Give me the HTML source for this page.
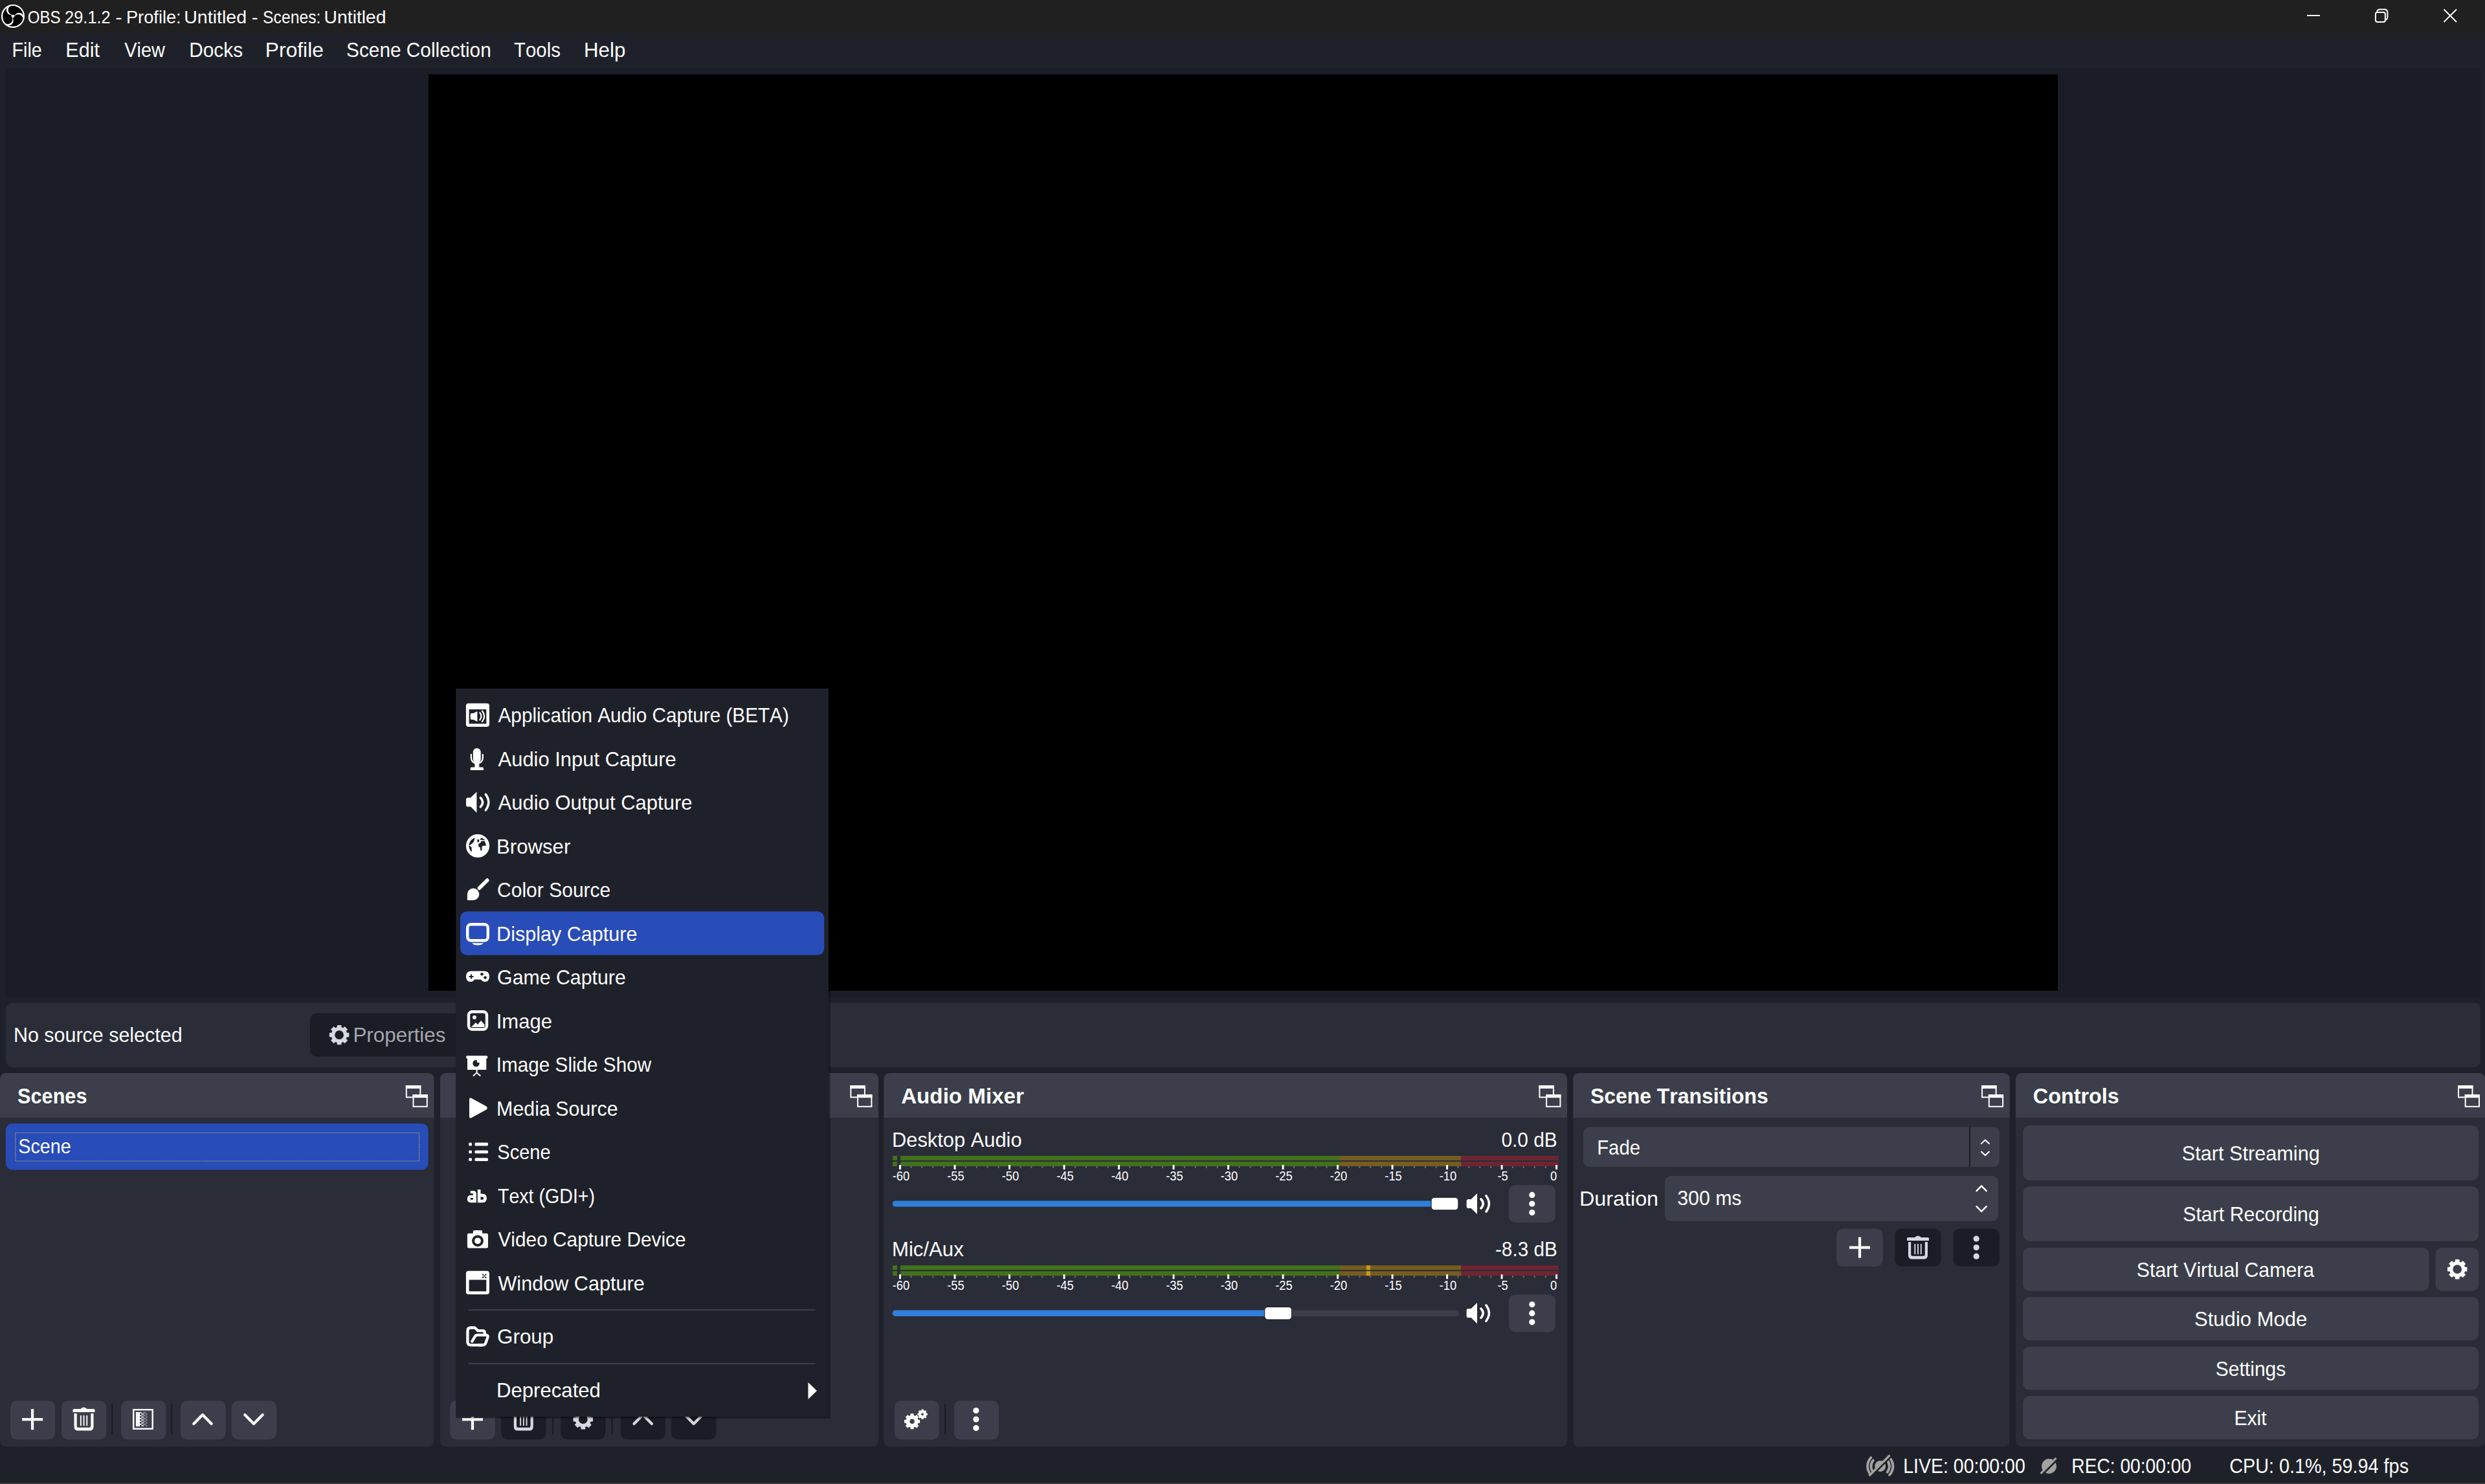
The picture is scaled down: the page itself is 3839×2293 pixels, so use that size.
<!DOCTYPE html>
<html><head><meta charset="utf-8"><title>OBS 29.1.2</title>
<style>html,body{margin:0;padding:0;width:3839px;height:2293px;overflow:hidden;background:#1f212a;}
svg text{font-family:"Liberation Sans", sans-serif;white-space:pre;font-kerning:none;}</style></head>
<body>
<svg width="3839" height="2293" viewBox="0 0 3839 2293" style="position:absolute;left:0;top:0;font-family:&quot;Liberation Sans&quot;, sans-serif;font-kerning:none">
<rect x="0.00" y="0.00" width="3839.00" height="2293.00" rx="0" fill="#1f212a" />
<rect x="0.00" y="0.00" width="3839.00" height="51.00" rx="0" fill="#202020" />
<clipPath id="logoclip"><circle cx="20" cy="25" r="16"/></clipPath>
<circle cx="20" cy="25" r="16.9" fill="#000" stroke="#fff" stroke-width="2.2"/>
<g clip-path="url(#logoclip)"><circle cx="17.40" cy="15.60" r="7.6" fill="#fff"/><circle cx="29.44" cy="27.45" r="7.6" fill="#fff"/><circle cx="13.16" cy="31.95" r="7.6" fill="#fff"/><circle cx="20" cy="25" r="2.6" fill="#fff"/><circle cx="20.00" cy="15.60" r="7.4" fill="#000"/><circle cx="28.14" cy="29.70" r="7.4" fill="#000"/><circle cx="11.86" cy="29.70" r="7.4" fill="#000"/></g>
<text x="42.76" y="36.00" font-size="27.6" fill="#fefefe" textLength="50.74" lengthAdjust="spacingAndGlyphs">OBS</text>
<text x="100.12" y="36.00" font-size="27.6" fill="#fefefe" textLength="70.55" lengthAdjust="spacingAndGlyphs">29.1.2</text>
<text x="178.30" y="36.00" font-size="27.6" fill="#fefefe" textLength="10.50" lengthAdjust="spacingAndGlyphs">-</text>
<text x="194.97" y="36.00" font-size="27.6" fill="#fefefe" textLength="84.72" lengthAdjust="spacingAndGlyphs">Profile:</text>
<text x="284.20" y="36.00" font-size="27.6" fill="#fefefe" textLength="96.84" lengthAdjust="spacingAndGlyphs">Untitled</text>
<text x="388.77" y="36.00" font-size="27.6" fill="#fefefe" textLength="9.96" lengthAdjust="spacingAndGlyphs">-</text>
<text x="406.08" y="36.00" font-size="27.6" fill="#fefefe" textLength="89.28" lengthAdjust="spacingAndGlyphs">Scenes:</text>
<text x="500.62" y="36.00" font-size="27.6" fill="#fefefe" textLength="96.01" lengthAdjust="spacingAndGlyphs">Untitled</text>
<rect x="3564.00" y="23.00" width="20.00" height="2.00" rx="0" fill="#fefefe" />
<path d="M3672,18 Q3673,14.6 3677,14.6 H3683.5 Q3688.4,14.6 3688.4,19.5 V26 Q3688.4,30 3685,31" fill="none" stroke="#fff" stroke-width="2"/>
<rect x="3669.9" y="18.9" width="15" height="15" rx="3" fill="#202020" stroke="#fff" stroke-width="2"/>
<path d="M3775.5,14.5 L3795,34 M3795,14.5 L3775.5,34" stroke="#fff" stroke-width="1.9"/>
<rect x="0.00" y="51.00" width="3839.00" height="54.00" rx="0" fill="#1f212a" />
<text x="18.55" y="88.00" font-size="30.5" fill="#fefefe" textLength="46.23" lengthAdjust="spacingAndGlyphs">File</text>
<text x="101.29" y="88.00" font-size="30.5" fill="#fefefe" textLength="52.63" lengthAdjust="spacingAndGlyphs">Edit</text>
<text x="192.27" y="88.00" font-size="30.5" fill="#fefefe" textLength="62.66" lengthAdjust="spacingAndGlyphs">View</text>
<text x="292.15" y="88.00" font-size="30.5" fill="#fefefe" textLength="82.93" lengthAdjust="spacingAndGlyphs">Docks</text>
<text x="409.89" y="88.00" font-size="30.5" fill="#fefefe" textLength="90.02" lengthAdjust="spacingAndGlyphs">Profile</text>
<text x="535.05" y="88.00" font-size="30.5" fill="#fefefe" textLength="223.69" lengthAdjust="spacingAndGlyphs">Scene Collection</text>
<text x="794.04" y="88.00" font-size="30.5" fill="#fefefe" textLength="71.82" lengthAdjust="spacingAndGlyphs">Tools</text>
<text x="902.04" y="88.00" font-size="30.5" fill="#fefefe" textLength="64.28" lengthAdjust="spacingAndGlyphs">Help</text>
<rect x="9.00" y="105.00" width="3823.00" height="1436.00" rx="0" fill="#1a1c26" />
<rect x="662.00" y="115.00" width="2517.00" height="1416.00" rx="0" fill="#000" />
<rect x="9.00" y="1549.50" width="3823.00" height="99.50" rx="10" fill="#2a2c38" />
<text x="20.90" y="1610.00" font-size="30.5" fill="#fefefe" textLength="260.76" lengthAdjust="spacingAndGlyphs">No source selected</text>
<rect x="479.00" y="1565.40" width="421.00" height="67.00" rx="10" fill="#1a1c26" />
<path d="M521.50,1587.77 L521.46,1584.65 L526.74,1584.65 L526.70,1587.77 L530.27,1589.25 L532.45,1587.02 L536.18,1590.75 L533.95,1592.93 L535.43,1596.50 L538.55,1596.46 L538.55,1601.74 L535.43,1601.70 L533.95,1605.27 L536.18,1607.45 L532.45,1611.18 L530.27,1608.95 L526.70,1610.43 L526.74,1613.55 L521.46,1613.55 L521.50,1610.43 L517.93,1608.95 L515.75,1611.18 L512.02,1607.45 L514.25,1605.27 L512.77,1601.70 L509.65,1601.74 L509.65,1596.46 L512.77,1596.50 L514.25,1592.93 L512.02,1590.75 L515.75,1587.02 L517.93,1589.25 Z M531.75,1599.10 A7.65,7.65 0 1 0 516.45,1599.10 A7.65,7.65 0 1 0 531.75,1599.10 Z" fill="#d6d8e0" fill-rule="evenodd" stroke="#d6d8e0" stroke-width="1.53" stroke-linejoin="round"/>
<text x="545.43" y="1610.00" font-size="30.5" fill="#a6a7ab" textLength="143.01" lengthAdjust="spacingAndGlyphs">Properties</text>
<path d="M0,1727 V1668 Q0,1658 10,1658 H660.4 Q670.4,1658 670.4,1668 V1727 Z" fill="#3c3f4b"/>
<path d="M0,1727 H670.4 V2225.3 Q670.4,2235.3 660.4,2235.3 H10 Q0,2235.3 0,2225.3 Z" fill="#2a2c38"/>
<text x="27.12" y="1704.80" font-size="32.5" font-weight="bold" fill="#fefefe" textLength="107.34" lengthAdjust="spacingAndGlyphs">Scenes</text>
<rect x="626.80" y="1677.00" width="23.50" height="19.40" fill="#3c3f4b"/>
<rect x="627.80" y="1678.00" width="21.50" height="17.40" fill="none" stroke="#fefefe" stroke-width="2"/>
<rect x="626.80" y="1677.00" width="23.50" height="5" fill="#fefefe"/>
<rect x="637.50" y="1691.20" width="23.30" height="19.60" fill="#3c3f4b"/>
<rect x="638.50" y="1692.20" width="21.30" height="17.60" fill="none" stroke="#fefefe" stroke-width="2"/>
<rect x="637.50" y="1691.20" width="23.30" height="5" fill="#fefefe"/>
<rect x="9.00" y="1736.00" width="652.60" height="71.60" rx="10" fill="#284cb8" />
<rect x="23.9" y="1750.5" width="623.6" height="43.5" fill="none" stroke="#c8b46a" stroke-width="1.2" stroke-dasharray="1.2 1.2"/>
<text x="28.30" y="1782.00" font-size="30.5" fill="#fefefe" textLength="81.48" lengthAdjust="spacingAndGlyphs">Scene</text>
<rect x="16.10" y="2164.20" width="69.00" height="60.00" rx="10" fill="#3c3f4b" />
<rect x="34.10" y="2191.10" width="32.00" height="4.2" fill="#fefefe"/>
<rect x="48.00" y="2177.20" width="4.2" height="32.00" fill="#fefefe"/>
<rect x="95.00" y="2164.20" width="69.00" height="60.00" rx="10" fill="#3c3f4b" />
<path d="M112.5,2182.0 V2178.5 Q112.5,2177.0 114.5,2177.0 H124.5 Q126.5,2174.5 129.5,2174.5 Q132.5,2174.5 134.5,2177.0 H144.5 Q146.5,2177.0 146.5,2178.5 V2182.0 Z" fill="#fefefe"/>
<path d="M114.5,2184.0 H118.7 V2203.5 Q118.7,2205.7 120.9,2205.7 H138.1 Q140.3,2205.7 140.3,2203.5 V2184.0 H144.5 V2204.5 Q144.5,2210.5 138.5,2210.5 H120.5 Q114.5,2210.5 114.5,2204.5 Z" fill="#fefefe"/>
<rect x="123.90" y="2187.0" width="1.9" height="16" fill="#fefefe"/>
<rect x="128.60" y="2187.0" width="1.9" height="16" fill="#fefefe"/>
<rect x="133.30" y="2187.0" width="1.9" height="16" fill="#fefefe"/>
<rect x="172.00" y="2169.00" width="2.20" height="47.70" rx="0" fill="#1b1c24" />
<rect x="187.00" y="2164.20" width="69.40" height="60.00" rx="10" fill="#3c3f4b" />
<rect x="206.2" y="2178.2" width="29.5" height="29.5" fill="none" stroke="#fff" stroke-width="2.4"/>
<rect x="209.9" y="2181.9" width="6.4" height="22.2" fill="#fff"/>
<rect x="216.3" y="2181.90" width="2.3" height="2.22" fill="#fff"/>
<rect x="220.8" y="2181.90" width="4.6" height="2.22" fill="#8a8e98"/>
<rect x="216.3" y="2184.12" width="2.3" height="2.22" fill="#1b1c24"/>
<rect x="218.6" y="2184.12" width="2.2" height="2.22" fill="#fff"/>
<rect x="220.8" y="2184.12" width="2.2" height="2.22" fill="#8a8e98"/>
<rect x="223" y="2184.12" width="2.2" height="2.22" fill="#2a2c36"/>
<rect x="225.2" y="2184.12" width="2.4" height="2.22" fill="#8a8e98"/>
<rect x="216.3" y="2186.34" width="2.3" height="2.22" fill="#fff"/>
<rect x="220.8" y="2186.34" width="4.6" height="2.22" fill="#8a8e98"/>
<rect x="216.3" y="2188.56" width="2.3" height="2.22" fill="#1b1c24"/>
<rect x="218.6" y="2188.56" width="2.2" height="2.22" fill="#fff"/>
<rect x="220.8" y="2188.56" width="2.2" height="2.22" fill="#8a8e98"/>
<rect x="223" y="2188.56" width="2.2" height="2.22" fill="#2a2c36"/>
<rect x="225.2" y="2188.56" width="2.4" height="2.22" fill="#8a8e98"/>
<rect x="216.3" y="2190.78" width="2.3" height="2.22" fill="#fff"/>
<rect x="220.8" y="2190.78" width="4.6" height="2.22" fill="#8a8e98"/>
<rect x="216.3" y="2193.00" width="2.3" height="2.22" fill="#1b1c24"/>
<rect x="218.6" y="2193.00" width="2.2" height="2.22" fill="#fff"/>
<rect x="220.8" y="2193.00" width="2.2" height="2.22" fill="#8a8e98"/>
<rect x="223" y="2193.00" width="2.2" height="2.22" fill="#2a2c36"/>
<rect x="225.2" y="2193.00" width="2.4" height="2.22" fill="#8a8e98"/>
<rect x="216.3" y="2195.22" width="2.3" height="2.22" fill="#fff"/>
<rect x="220.8" y="2195.22" width="4.6" height="2.22" fill="#8a8e98"/>
<rect x="216.3" y="2197.44" width="2.3" height="2.22" fill="#1b1c24"/>
<rect x="218.6" y="2197.44" width="2.2" height="2.22" fill="#fff"/>
<rect x="220.8" y="2197.44" width="2.2" height="2.22" fill="#8a8e98"/>
<rect x="223" y="2197.44" width="2.2" height="2.22" fill="#2a2c36"/>
<rect x="225.2" y="2197.44" width="2.4" height="2.22" fill="#8a8e98"/>
<rect x="216.3" y="2199.66" width="2.3" height="2.22" fill="#fff"/>
<rect x="220.8" y="2199.66" width="4.6" height="2.22" fill="#8a8e98"/>
<rect x="216.3" y="2201.88" width="2.3" height="2.22" fill="#1b1c24"/>
<rect x="218.6" y="2201.88" width="2.2" height="2.22" fill="#fff"/>
<rect x="220.8" y="2201.88" width="2.2" height="2.22" fill="#8a8e98"/>
<rect x="223" y="2201.88" width="2.2" height="2.22" fill="#2a2c36"/>
<rect x="225.2" y="2201.88" width="2.4" height="2.22" fill="#8a8e98"/>
<rect x="264.20" y="2169.00" width="2.20" height="47.70" rx="0" fill="#1b1c24" />
<rect x="278.90" y="2164.20" width="69.80" height="60.00" rx="10" fill="#3c3f4b" />
<path d="M299.25,2200.0 L313,2186.0 L326.75,2200.0" fill="none" stroke="#fefefe" stroke-width="4.2" stroke-linecap="round" stroke-linejoin="round"/>
<rect x="357.70" y="2164.20" width="69.60" height="60.00" rx="10" fill="#3c3f4b" />
<path d="M378.25,2186.0 L392,2200.0 L405.75,2186.0" fill="none" stroke="#fefefe" stroke-width="4.2" stroke-linecap="round" stroke-linejoin="round"/>
<path d="M680,1727 V1668 Q680,1658 690,1658 H1347 Q1357,1658 1357,1668 V1727 Z" fill="#3c3f4b"/>
<path d="M680,1727 H1357 V2225.3 Q1357,2235.3 1347,2235.3 H690 Q680,2235.3 680,2225.3 Z" fill="#2a2c38"/>
<text x="706.06" y="1704.80" font-size="32.5" font-weight="bold" fill="#fefefe" textLength="128.25" lengthAdjust="spacingAndGlyphs">Sources</text>
<rect x="1313.40" y="1677.00" width="23.50" height="19.40" fill="#3c3f4b"/>
<rect x="1314.40" y="1678.00" width="21.50" height="17.40" fill="none" stroke="#fefefe" stroke-width="2"/>
<rect x="1313.40" y="1677.00" width="23.50" height="5" fill="#fefefe"/>
<rect x="1324.10" y="1691.20" width="23.30" height="19.60" fill="#3c3f4b"/>
<rect x="1325.10" y="1692.20" width="21.30" height="17.60" fill="none" stroke="#fefefe" stroke-width="2"/>
<rect x="1324.10" y="1691.20" width="23.30" height="5" fill="#fefefe"/>
<rect x="695.20" y="2164.20" width="69.60" height="60.00" rx="10" fill="#3c3f4b" />
<rect x="714.00" y="2191.10" width="32.00" height="4.2" fill="#fefefe"/>
<rect x="727.90" y="2177.20" width="4.2" height="32.00" fill="#fefefe"/>
<rect x="774.20" y="2164.20" width="69.30" height="60.00" rx="10" fill="#1a1c26" />
<path d="M791.8,2182.0 V2178.5 Q791.8,2177.0 793.8,2177.0 H803.8 Q805.8,2174.5 808.8,2174.5 Q811.8,2174.5 813.8,2177.0 H823.8 Q825.8,2177.0 825.8,2178.5 V2182.0 Z" fill="#d6d8e0"/>
<path d="M793.8,2184.0 H798.0 V2203.5 Q798.0,2205.7 800.1999999999999,2205.7 H817.4 Q819.5999999999999,2205.7 819.5999999999999,2203.5 V2184.0 H823.8 V2204.5 Q823.8,2210.5 817.8,2210.5 H799.8 Q793.8,2210.5 793.8,2204.5 Z" fill="#d6d8e0"/>
<rect x="803.20" y="2187.0" width="1.9" height="16" fill="#d6d8e0"/>
<rect x="807.90" y="2187.0" width="1.9" height="16" fill="#d6d8e0"/>
<rect x="812.60" y="2187.0" width="1.9" height="16" fill="#d6d8e0"/>
<rect x="853.00" y="2169.00" width="2.20" height="47.70" rx="0" fill="#1b1c24" />
<rect x="866.20" y="2164.20" width="69.20" height="60.00" rx="10" fill="#1a1c26" />
<path d="M898.20,2181.87 L898.16,2178.75 L903.44,2178.75 L903.40,2181.87 L906.97,2183.35 L909.15,2181.12 L912.88,2184.85 L910.65,2187.03 L912.13,2190.60 L915.25,2190.56 L915.25,2195.84 L912.13,2195.80 L910.65,2199.37 L912.88,2201.55 L909.15,2205.28 L906.97,2203.05 L903.40,2204.53 L903.44,2207.65 L898.16,2207.65 L898.20,2204.53 L894.63,2203.05 L892.45,2205.28 L888.72,2201.55 L890.95,2199.37 L889.47,2195.80 L886.35,2195.84 L886.35,2190.56 L889.47,2190.60 L890.95,2187.03 L888.72,2184.85 L892.45,2181.12 L894.63,2183.35 Z M908.45,2193.20 A7.65,7.65 0 1 0 893.15,2193.20 A7.65,7.65 0 1 0 908.45,2193.20 Z" fill="#d6d8e0" fill-rule="evenodd" stroke="#d6d8e0" stroke-width="1.53" stroke-linejoin="round"/>
<rect x="944.50" y="2169.00" width="2.20" height="47.70" rx="0" fill="#1b1c24" />
<rect x="958.80" y="2164.20" width="68.90" height="60.00" rx="10" fill="#1a1c26" />
<path d="M979.45,2200.0 L993.2,2186.0 L1006.95,2200.0" fill="none" stroke="#d6d8e0" stroke-width="4.2" stroke-linecap="round" stroke-linejoin="round"/>
<rect x="1037.00" y="2164.20" width="69.40" height="60.00" rx="10" fill="#1a1c26" />
<path d="M1057.95,2186.0 L1071.7,2200.0 L1085.45,2186.0" fill="none" stroke="#d6d8e0" stroke-width="4.2" stroke-linecap="round" stroke-linejoin="round"/>
<path d="M1365.5,1727 V1668 Q1365.5,1658 1375.5,1658 H2411 Q2421,1658 2421,1668 V1727 Z" fill="#3c3f4b"/>
<path d="M1365.5,1727 H2421 V2225.3 Q2421,2235.3 2411,2235.3 H1375.5 Q1365.5,2235.3 1365.5,2225.3 Z" fill="#2a2c38"/>
<text x="1392.17" y="1704.80" font-size="32.5" font-weight="bold" fill="#fefefe" textLength="189.83" lengthAdjust="spacingAndGlyphs">Audio Mixer</text>
<rect x="2377.40" y="1677.00" width="23.50" height="19.40" fill="#3c3f4b"/>
<rect x="2378.40" y="1678.00" width="21.50" height="17.40" fill="none" stroke="#fefefe" stroke-width="2"/>
<rect x="2377.40" y="1677.00" width="23.50" height="5" fill="#fefefe"/>
<rect x="2388.10" y="1691.20" width="23.30" height="19.60" fill="#3c3f4b"/>
<rect x="2389.10" y="1692.20" width="21.30" height="17.60" fill="none" stroke="#fefefe" stroke-width="2"/>
<rect x="2388.10" y="1691.20" width="23.30" height="5" fill="#fefefe"/>
<text x="1377.97" y="1772.00" font-size="30.5" fill="#fefefe" textLength="200.63" lengthAdjust="spacingAndGlyphs">Desktop Audio</text>
<text x="2319.43" y="1771.60" font-size="30.5" fill="#fefefe" textLength="86.34" lengthAdjust="spacingAndGlyphs">0.0 dB</text>
<rect x="1378.90" y="1786.00" width="7.10" height="7.00" rx="0" fill="#42711b" />
<rect x="1391.00" y="1786.00" width="679.00" height="7.00" rx="0" fill="#42711b" />
<rect x="2070.00" y="1786.00" width="187.00" height="7.00" rx="0" fill="#745d20" />
<rect x="2257.00" y="1786.00" width="150.80" height="7.00" rx="0" fill="#6e2532" />
<rect x="1378.90" y="1795.00" width="7.10" height="7.00" rx="0" fill="#42711b" />
<rect x="1391.00" y="1795.00" width="679.00" height="7.00" rx="0" fill="#42711b" />
<rect x="2070.00" y="1795.00" width="187.00" height="7.00" rx="0" fill="#745d20" />
<rect x="2257.00" y="1795.00" width="150.80" height="7.00" rx="0" fill="#6e2532" />
<rect x="1389.00" y="1800.00" width="3.00" height="7.00" rx="0" fill="#ffffff" />
<rect x="1406.40" y="1802.00" width="2.00" height="3.00" rx="0" fill="#6b6c72" />
<rect x="1423.30" y="1802.00" width="2.00" height="3.00" rx="0" fill="#6b6c72" />
<rect x="1440.20" y="1802.00" width="2.00" height="3.00" rx="0" fill="#6b6c72" />
<rect x="1457.11" y="1802.00" width="2.00" height="3.00" rx="0" fill="#6b6c72" />
<rect x="1473.51" y="1800.00" width="3.00" height="7.00" rx="0" fill="#ffffff" />
<rect x="1490.91" y="1802.00" width="2.00" height="3.00" rx="0" fill="#6b6c72" />
<rect x="1507.81" y="1802.00" width="2.00" height="3.00" rx="0" fill="#6b6c72" />
<rect x="1524.71" y="1802.00" width="2.00" height="3.00" rx="0" fill="#6b6c72" />
<rect x="1541.62" y="1802.00" width="2.00" height="3.00" rx="0" fill="#6b6c72" />
<rect x="1558.02" y="1800.00" width="3.00" height="7.00" rx="0" fill="#ffffff" />
<rect x="1575.42" y="1802.00" width="2.00" height="3.00" rx="0" fill="#6b6c72" />
<rect x="1592.32" y="1802.00" width="2.00" height="3.00" rx="0" fill="#6b6c72" />
<rect x="1609.22" y="1802.00" width="2.00" height="3.00" rx="0" fill="#6b6c72" />
<rect x="1626.12" y="1802.00" width="2.00" height="3.00" rx="0" fill="#6b6c72" />
<rect x="1642.52" y="1800.00" width="3.00" height="7.00" rx="0" fill="#ffffff" />
<rect x="1659.93" y="1802.00" width="2.00" height="3.00" rx="0" fill="#6b6c72" />
<rect x="1676.83" y="1802.00" width="2.00" height="3.00" rx="0" fill="#6b6c72" />
<rect x="1693.73" y="1802.00" width="2.00" height="3.00" rx="0" fill="#6b6c72" />
<rect x="1710.63" y="1802.00" width="2.00" height="3.00" rx="0" fill="#6b6c72" />
<rect x="1727.03" y="1800.00" width="3.00" height="7.00" rx="0" fill="#ffffff" />
<rect x="1744.43" y="1802.00" width="2.00" height="3.00" rx="0" fill="#6b6c72" />
<rect x="1761.34" y="1802.00" width="2.00" height="3.00" rx="0" fill="#6b6c72" />
<rect x="1778.24" y="1802.00" width="2.00" height="3.00" rx="0" fill="#6b6c72" />
<rect x="1795.14" y="1802.00" width="2.00" height="3.00" rx="0" fill="#6b6c72" />
<rect x="1811.54" y="1800.00" width="3.00" height="7.00" rx="0" fill="#ffffff" />
<rect x="1828.94" y="1802.00" width="2.00" height="3.00" rx="0" fill="#6b6c72" />
<rect x="1845.84" y="1802.00" width="2.00" height="3.00" rx="0" fill="#6b6c72" />
<rect x="1862.75" y="1802.00" width="2.00" height="3.00" rx="0" fill="#6b6c72" />
<rect x="1879.65" y="1802.00" width="2.00" height="3.00" rx="0" fill="#6b6c72" />
<rect x="1896.05" y="1800.00" width="3.00" height="7.00" rx="0" fill="#ffffff" />
<rect x="1913.45" y="1802.00" width="2.00" height="3.00" rx="0" fill="#6b6c72" />
<rect x="1930.35" y="1802.00" width="2.00" height="3.00" rx="0" fill="#6b6c72" />
<rect x="1947.25" y="1802.00" width="2.00" height="3.00" rx="0" fill="#6b6c72" />
<rect x="1964.16" y="1802.00" width="2.00" height="3.00" rx="0" fill="#6b6c72" />
<rect x="1980.56" y="1800.00" width="3.00" height="7.00" rx="0" fill="#ffffff" />
<rect x="1997.96" y="1802.00" width="2.00" height="3.00" rx="0" fill="#6b6c72" />
<rect x="2014.86" y="1802.00" width="2.00" height="3.00" rx="0" fill="#6b6c72" />
<rect x="2031.76" y="1802.00" width="2.00" height="3.00" rx="0" fill="#6b6c72" />
<rect x="2048.66" y="1802.00" width="2.00" height="3.00" rx="0" fill="#6b6c72" />
<rect x="2065.07" y="1800.00" width="3.00" height="7.00" rx="0" fill="#ffffff" />
<rect x="2082.47" y="1802.00" width="2.00" height="3.00" rx="0" fill="#6b6c72" />
<rect x="2099.37" y="1802.00" width="2.00" height="3.00" rx="0" fill="#6b6c72" />
<rect x="2116.27" y="1802.00" width="2.00" height="3.00" rx="0" fill="#6b6c72" />
<rect x="2133.17" y="1802.00" width="2.00" height="3.00" rx="0" fill="#6b6c72" />
<rect x="2149.57" y="1800.00" width="3.00" height="7.00" rx="0" fill="#ffffff" />
<rect x="2166.98" y="1802.00" width="2.00" height="3.00" rx="0" fill="#6b6c72" />
<rect x="2183.88" y="1802.00" width="2.00" height="3.00" rx="0" fill="#6b6c72" />
<rect x="2200.78" y="1802.00" width="2.00" height="3.00" rx="0" fill="#6b6c72" />
<rect x="2217.68" y="1802.00" width="2.00" height="3.00" rx="0" fill="#6b6c72" />
<rect x="2234.08" y="1800.00" width="3.00" height="7.00" rx="0" fill="#ffffff" />
<rect x="2251.48" y="1802.00" width="2.00" height="3.00" rx="0" fill="#6b6c72" />
<rect x="2268.39" y="1802.00" width="2.00" height="3.00" rx="0" fill="#6b6c72" />
<rect x="2285.29" y="1802.00" width="2.00" height="3.00" rx="0" fill="#6b6c72" />
<rect x="2302.19" y="1802.00" width="2.00" height="3.00" rx="0" fill="#6b6c72" />
<rect x="2318.59" y="1800.00" width="3.00" height="7.00" rx="0" fill="#ffffff" />
<rect x="2335.99" y="1802.00" width="2.00" height="3.00" rx="0" fill="#6b6c72" />
<rect x="2352.89" y="1802.00" width="2.00" height="3.00" rx="0" fill="#6b6c72" />
<rect x="2369.80" y="1802.00" width="2.00" height="3.00" rx="0" fill="#6b6c72" />
<rect x="2386.70" y="1802.00" width="2.00" height="3.00" rx="0" fill="#6b6c72" />
<rect x="2403.10" y="1800.00" width="3.00" height="7.00" rx="0" fill="#ffffff" />
<text x="1378.65" y="1823.80" font-size="20" fill="#fefefe" textLength="26.59" lengthAdjust="spacingAndGlyphs">-60</text>
<text x="1463.19" y="1823.80" font-size="20" fill="#fefefe" textLength="26.59" lengthAdjust="spacingAndGlyphs">-55</text>
<text x="1547.67" y="1823.80" font-size="20" fill="#fefefe" textLength="26.59" lengthAdjust="spacingAndGlyphs">-50</text>
<text x="1632.21" y="1823.80" font-size="20" fill="#fefefe" textLength="26.59" lengthAdjust="spacingAndGlyphs">-45</text>
<text x="1716.69" y="1823.80" font-size="20" fill="#fefefe" textLength="26.59" lengthAdjust="spacingAndGlyphs">-40</text>
<text x="1801.22" y="1823.80" font-size="20" fill="#fefefe" textLength="26.59" lengthAdjust="spacingAndGlyphs">-35</text>
<text x="1885.70" y="1823.80" font-size="20" fill="#fefefe" textLength="26.59" lengthAdjust="spacingAndGlyphs">-30</text>
<text x="1970.24" y="1823.80" font-size="20" fill="#fefefe" textLength="26.59" lengthAdjust="spacingAndGlyphs">-25</text>
<text x="2054.72" y="1823.80" font-size="20" fill="#fefefe" textLength="26.59" lengthAdjust="spacingAndGlyphs">-20</text>
<text x="2139.26" y="1823.80" font-size="20" fill="#fefefe" textLength="26.59" lengthAdjust="spacingAndGlyphs">-15</text>
<text x="2223.74" y="1823.80" font-size="20" fill="#fefefe" textLength="26.59" lengthAdjust="spacingAndGlyphs">-10</text>
<text x="2313.39" y="1823.80" font-size="20" fill="#fefefe" textLength="16.36" lengthAdjust="spacingAndGlyphs">-5</text>
<text x="2394.99" y="1823.80" font-size="20" fill="#fefefe" textLength="10.23" lengthAdjust="spacingAndGlyphs">0</text>
<rect x="1378.80" y="1855.40" width="875.20" height="9.20" rx="4.6" fill="#3c3f4b" />
<rect x="1378.80" y="1855.40" width="837.80" height="9.20" rx="4.6" fill="#2f80dc" />
<rect x="2211.10" y="1850.20" width="41.80" height="19.6" rx="5" fill="#fff" stroke="#14161d" stroke-width="1"/>
<g transform="translate(2265.6,1843.9) scale(1.0)"><path d="M7.1,9 L16.4,0 V32.1 L7.1,23 H3.2 Q0,23 0,19.8 V12.2 Q0,9 3.2,9 Z" fill="#fefefe"/><path d="M22.3,8.9 Q28.9,16 22.3,23.1" fill="none" stroke="#fefefe" stroke-width="3.5" stroke-linecap="round"/><path d="M30.3,3.8 Q39.3,16 30.3,28.2" fill="none" stroke="#fefefe" stroke-width="3.5" stroke-linecap="round"/></g>
<rect x="2330.80" y="1831.00" width="72.10" height="58.00" rx="10" fill="#3c3f4b" />
<circle cx="2366.8" cy="1846.40" r="4.6" fill="#fefefe"/>
<circle cx="2366.8" cy="1860.00" r="4.6" fill="#fefefe"/>
<circle cx="2366.8" cy="1873.60" r="4.6" fill="#fefefe"/>
<text x="1377.94" y="1941.20" font-size="30.5" fill="#fefefe" textLength="110.79" lengthAdjust="spacingAndGlyphs">Mic/Aux</text>
<text x="2309.98" y="1940.80" font-size="30.5" fill="#fefefe" textLength="95.79" lengthAdjust="spacingAndGlyphs">-8.3 dB</text>
<rect x="1378.90" y="1955.20" width="7.10" height="7.00" rx="0" fill="#42711b" />
<rect x="1391.00" y="1955.20" width="679.00" height="7.00" rx="0" fill="#42711b" />
<rect x="2070.00" y="1955.20" width="187.00" height="7.00" rx="0" fill="#745d20" />
<rect x="2257.00" y="1955.20" width="150.80" height="7.00" rx="0" fill="#6e2532" />
<rect x="2110.89" y="1955.20" width="6.00" height="7.00" rx="0" fill="#c99a12" />
<rect x="1378.90" y="1964.20" width="7.10" height="7.00" rx="0" fill="#42711b" />
<rect x="1391.00" y="1964.20" width="679.00" height="7.00" rx="0" fill="#42711b" />
<rect x="2070.00" y="1964.20" width="187.00" height="7.00" rx="0" fill="#745d20" />
<rect x="2257.00" y="1964.20" width="150.80" height="7.00" rx="0" fill="#6e2532" />
<rect x="2110.89" y="1964.20" width="6.00" height="7.00" rx="0" fill="#c99a12" />
<rect x="1389.00" y="1969.20" width="3.00" height="7.00" rx="0" fill="#ffffff" />
<rect x="1406.40" y="1971.20" width="2.00" height="3.00" rx="0" fill="#6b6c72" />
<rect x="1423.30" y="1971.20" width="2.00" height="3.00" rx="0" fill="#6b6c72" />
<rect x="1440.20" y="1971.20" width="2.00" height="3.00" rx="0" fill="#6b6c72" />
<rect x="1457.11" y="1971.20" width="2.00" height="3.00" rx="0" fill="#6b6c72" />
<rect x="1473.51" y="1969.20" width="3.00" height="7.00" rx="0" fill="#ffffff" />
<rect x="1490.91" y="1971.20" width="2.00" height="3.00" rx="0" fill="#6b6c72" />
<rect x="1507.81" y="1971.20" width="2.00" height="3.00" rx="0" fill="#6b6c72" />
<rect x="1524.71" y="1971.20" width="2.00" height="3.00" rx="0" fill="#6b6c72" />
<rect x="1541.62" y="1971.20" width="2.00" height="3.00" rx="0" fill="#6b6c72" />
<rect x="1558.02" y="1969.20" width="3.00" height="7.00" rx="0" fill="#ffffff" />
<rect x="1575.42" y="1971.20" width="2.00" height="3.00" rx="0" fill="#6b6c72" />
<rect x="1592.32" y="1971.20" width="2.00" height="3.00" rx="0" fill="#6b6c72" />
<rect x="1609.22" y="1971.20" width="2.00" height="3.00" rx="0" fill="#6b6c72" />
<rect x="1626.12" y="1971.20" width="2.00" height="3.00" rx="0" fill="#6b6c72" />
<rect x="1642.52" y="1969.20" width="3.00" height="7.00" rx="0" fill="#ffffff" />
<rect x="1659.93" y="1971.20" width="2.00" height="3.00" rx="0" fill="#6b6c72" />
<rect x="1676.83" y="1971.20" width="2.00" height="3.00" rx="0" fill="#6b6c72" />
<rect x="1693.73" y="1971.20" width="2.00" height="3.00" rx="0" fill="#6b6c72" />
<rect x="1710.63" y="1971.20" width="2.00" height="3.00" rx="0" fill="#6b6c72" />
<rect x="1727.03" y="1969.20" width="3.00" height="7.00" rx="0" fill="#ffffff" />
<rect x="1744.43" y="1971.20" width="2.00" height="3.00" rx="0" fill="#6b6c72" />
<rect x="1761.34" y="1971.20" width="2.00" height="3.00" rx="0" fill="#6b6c72" />
<rect x="1778.24" y="1971.20" width="2.00" height="3.00" rx="0" fill="#6b6c72" />
<rect x="1795.14" y="1971.20" width="2.00" height="3.00" rx="0" fill="#6b6c72" />
<rect x="1811.54" y="1969.20" width="3.00" height="7.00" rx="0" fill="#ffffff" />
<rect x="1828.94" y="1971.20" width="2.00" height="3.00" rx="0" fill="#6b6c72" />
<rect x="1845.84" y="1971.20" width="2.00" height="3.00" rx="0" fill="#6b6c72" />
<rect x="1862.75" y="1971.20" width="2.00" height="3.00" rx="0" fill="#6b6c72" />
<rect x="1879.65" y="1971.20" width="2.00" height="3.00" rx="0" fill="#6b6c72" />
<rect x="1896.05" y="1969.20" width="3.00" height="7.00" rx="0" fill="#ffffff" />
<rect x="1913.45" y="1971.20" width="2.00" height="3.00" rx="0" fill="#6b6c72" />
<rect x="1930.35" y="1971.20" width="2.00" height="3.00" rx="0" fill="#6b6c72" />
<rect x="1947.25" y="1971.20" width="2.00" height="3.00" rx="0" fill="#6b6c72" />
<rect x="1964.16" y="1971.20" width="2.00" height="3.00" rx="0" fill="#6b6c72" />
<rect x="1980.56" y="1969.20" width="3.00" height="7.00" rx="0" fill="#ffffff" />
<rect x="1997.96" y="1971.20" width="2.00" height="3.00" rx="0" fill="#6b6c72" />
<rect x="2014.86" y="1971.20" width="2.00" height="3.00" rx="0" fill="#6b6c72" />
<rect x="2031.76" y="1971.20" width="2.00" height="3.00" rx="0" fill="#6b6c72" />
<rect x="2048.66" y="1971.20" width="2.00" height="3.00" rx="0" fill="#6b6c72" />
<rect x="2065.07" y="1969.20" width="3.00" height="7.00" rx="0" fill="#ffffff" />
<rect x="2082.47" y="1971.20" width="2.00" height="3.00" rx="0" fill="#6b6c72" />
<rect x="2099.37" y="1971.20" width="2.00" height="3.00" rx="0" fill="#6b6c72" />
<rect x="2116.27" y="1971.20" width="2.00" height="3.00" rx="0" fill="#6b6c72" />
<rect x="2133.17" y="1971.20" width="2.00" height="3.00" rx="0" fill="#6b6c72" />
<rect x="2149.57" y="1969.20" width="3.00" height="7.00" rx="0" fill="#ffffff" />
<rect x="2166.98" y="1971.20" width="2.00" height="3.00" rx="0" fill="#6b6c72" />
<rect x="2183.88" y="1971.20" width="2.00" height="3.00" rx="0" fill="#6b6c72" />
<rect x="2200.78" y="1971.20" width="2.00" height="3.00" rx="0" fill="#6b6c72" />
<rect x="2217.68" y="1971.20" width="2.00" height="3.00" rx="0" fill="#6b6c72" />
<rect x="2234.08" y="1969.20" width="3.00" height="7.00" rx="0" fill="#ffffff" />
<rect x="2251.48" y="1971.20" width="2.00" height="3.00" rx="0" fill="#6b6c72" />
<rect x="2268.39" y="1971.20" width="2.00" height="3.00" rx="0" fill="#6b6c72" />
<rect x="2285.29" y="1971.20" width="2.00" height="3.00" rx="0" fill="#6b6c72" />
<rect x="2302.19" y="1971.20" width="2.00" height="3.00" rx="0" fill="#6b6c72" />
<rect x="2318.59" y="1969.20" width="3.00" height="7.00" rx="0" fill="#ffffff" />
<rect x="2335.99" y="1971.20" width="2.00" height="3.00" rx="0" fill="#6b6c72" />
<rect x="2352.89" y="1971.20" width="2.00" height="3.00" rx="0" fill="#6b6c72" />
<rect x="2369.80" y="1971.20" width="2.00" height="3.00" rx="0" fill="#6b6c72" />
<rect x="2386.70" y="1971.20" width="2.00" height="3.00" rx="0" fill="#6b6c72" />
<rect x="2403.10" y="1969.20" width="3.00" height="7.00" rx="0" fill="#ffffff" />
<text x="1378.65" y="1993.00" font-size="20" fill="#fefefe" textLength="26.59" lengthAdjust="spacingAndGlyphs">-60</text>
<text x="1463.19" y="1993.00" font-size="20" fill="#fefefe" textLength="26.59" lengthAdjust="spacingAndGlyphs">-55</text>
<text x="1547.67" y="1993.00" font-size="20" fill="#fefefe" textLength="26.59" lengthAdjust="spacingAndGlyphs">-50</text>
<text x="1632.21" y="1993.00" font-size="20" fill="#fefefe" textLength="26.59" lengthAdjust="spacingAndGlyphs">-45</text>
<text x="1716.69" y="1993.00" font-size="20" fill="#fefefe" textLength="26.59" lengthAdjust="spacingAndGlyphs">-40</text>
<text x="1801.22" y="1993.00" font-size="20" fill="#fefefe" textLength="26.59" lengthAdjust="spacingAndGlyphs">-35</text>
<text x="1885.70" y="1993.00" font-size="20" fill="#fefefe" textLength="26.59" lengthAdjust="spacingAndGlyphs">-30</text>
<text x="1970.24" y="1993.00" font-size="20" fill="#fefefe" textLength="26.59" lengthAdjust="spacingAndGlyphs">-25</text>
<text x="2054.72" y="1993.00" font-size="20" fill="#fefefe" textLength="26.59" lengthAdjust="spacingAndGlyphs">-20</text>
<text x="2139.26" y="1993.00" font-size="20" fill="#fefefe" textLength="26.59" lengthAdjust="spacingAndGlyphs">-15</text>
<text x="2223.74" y="1993.00" font-size="20" fill="#fefefe" textLength="26.59" lengthAdjust="spacingAndGlyphs">-10</text>
<text x="2313.39" y="1993.00" font-size="20" fill="#fefefe" textLength="16.36" lengthAdjust="spacingAndGlyphs">-5</text>
<text x="2394.99" y="1993.00" font-size="20" fill="#fefefe" textLength="10.23" lengthAdjust="spacingAndGlyphs">0</text>
<rect x="1378.80" y="2024.60" width="875.20" height="9.20" rx="4.6" fill="#3c3f4b" />
<rect x="1378.80" y="2024.60" width="580.40" height="9.20" rx="4.6" fill="#2f80dc" />
<rect x="1953.70" y="2019.40" width="41.80" height="19.6" rx="5" fill="#fff" stroke="#14161d" stroke-width="1"/>
<g transform="translate(2265.6,2013.1000000000001) scale(1.0)"><path d="M7.1,9 L16.4,0 V32.1 L7.1,23 H3.2 Q0,23 0,19.8 V12.2 Q0,9 3.2,9 Z" fill="#fefefe"/><path d="M22.3,8.9 Q28.9,16 22.3,23.1" fill="none" stroke="#fefefe" stroke-width="3.5" stroke-linecap="round"/><path d="M30.3,3.8 Q39.3,16 30.3,28.2" fill="none" stroke="#fefefe" stroke-width="3.5" stroke-linecap="round"/></g>
<rect x="2330.80" y="2000.20" width="72.10" height="58.00" rx="10" fill="#3c3f4b" />
<circle cx="2366.8" cy="2015.60" r="4.6" fill="#fefefe"/>
<circle cx="2366.8" cy="2029.20" r="4.6" fill="#fefefe"/>
<circle cx="2366.8" cy="2042.80" r="4.6" fill="#fefefe"/>
<rect x="1381.90" y="2164.20" width="68.90" height="60.00" rx="10" fill="#3c3f4b" />
<path d="M1407.22,2187.29 L1407.20,2184.86 L1411.00,2184.86 L1410.98,2187.29 L1414.14,2188.60 L1415.84,2186.86 L1418.54,2189.56 L1416.80,2191.26 L1418.11,2194.42 L1420.54,2194.40 L1420.54,2198.20 L1418.11,2198.18 L1416.80,2201.34 L1418.54,2203.04 L1415.84,2205.74 L1414.14,2204.00 L1410.98,2205.31 L1411.00,2207.74 L1407.20,2207.74 L1407.22,2205.31 L1404.06,2204.00 L1402.36,2205.74 L1399.66,2203.04 L1401.40,2201.34 L1400.09,2198.18 L1397.66,2198.20 L1397.66,2194.40 L1400.09,2194.42 L1401.40,2191.26 L1399.66,2189.56 L1402.36,2186.86 L1404.06,2188.60 Z M1413.40,2196.30 A4.3,4.3 0 1 0 1404.80,2196.30 A4.3,4.3 0 1 0 1413.40,2196.30 Z" fill="#fff" fill-rule="evenodd" stroke="#fff" stroke-width="1.2" stroke-linejoin="round"/>
<path d="M1423.89,2179.42 L1423.89,2177.90 L1426.31,2177.90 L1426.31,2179.42 L1428.33,2180.26 L1429.40,2179.18 L1431.12,2180.90 L1430.04,2181.97 L1430.88,2183.99 L1432.40,2183.99 L1432.40,2186.41 L1430.88,2186.41 L1430.04,2188.43 L1431.12,2189.50 L1429.40,2191.22 L1428.33,2190.14 L1426.31,2190.98 L1426.31,2192.50 L1423.89,2192.50 L1423.89,2190.98 L1421.87,2190.14 L1420.80,2191.22 L1419.08,2189.50 L1420.16,2188.43 L1419.32,2186.41 L1417.80,2186.41 L1417.80,2183.99 L1419.32,2183.99 L1420.16,2181.97 L1419.08,2180.90 L1420.80,2179.18 L1421.87,2180.26 Z M1427.40,2185.20 A2.3,2.3 0 1 0 1422.80,2185.20 A2.3,2.3 0 1 0 1427.40,2185.20 Z" fill="#fff" fill-rule="evenodd" stroke="#fff" stroke-width="0.8" stroke-linejoin="round"/>
<rect x="1459.00" y="2169.00" width="2.20" height="47.70" rx="0" fill="#1b1c24" />
<rect x="1473.80" y="2164.20" width="69.30" height="60.00" rx="10" fill="#3c3f4b" />
<circle cx="1507.9" cy="2179.50" r="4.6" fill="#fefefe"/>
<circle cx="1507.9" cy="2193.00" r="4.6" fill="#fefefe"/>
<circle cx="1507.9" cy="2206.50" r="4.6" fill="#fefefe"/>
<path d="M2430.3,1727 V1668 Q2430.3,1658 2440.3,1658 H3094.7 Q3104.7,1658 3104.7,1668 V1727 Z" fill="#3c3f4b"/>
<path d="M2430.3,1727 H3104.7 V2225.3 Q3104.7,2235.3 3094.7,2235.3 H2440.3 Q2430.3,2235.3 2430.3,2225.3 Z" fill="#2a2c38"/>
<text x="2456.98" y="1704.80" font-size="32.5" font-weight="bold" fill="#fefefe" textLength="274.83" lengthAdjust="spacingAndGlyphs">Scene Transitions</text>
<rect x="3061.10" y="1677.00" width="23.50" height="19.40" fill="#3c3f4b"/>
<rect x="3062.10" y="1678.00" width="21.50" height="17.40" fill="none" stroke="#fefefe" stroke-width="2"/>
<rect x="3061.10" y="1677.00" width="23.50" height="5" fill="#fefefe"/>
<rect x="3071.80" y="1691.20" width="23.30" height="19.60" fill="#3c3f4b"/>
<rect x="3072.80" y="1692.20" width="21.30" height="17.60" fill="none" stroke="#fefefe" stroke-width="2"/>
<rect x="3071.80" y="1691.20" width="23.30" height="5" fill="#fefefe"/>
<rect x="2446.00" y="1741.40" width="643.00" height="61.60" rx="9" fill="#3c3f4b" />
<rect x="3042.00" y="1741.40" width="2.00" height="61.60" rx="0" fill="#1b1c24" />
<path d="M3060.9,1767.1 L3066.9,1761.5 L3072.9,1767.1" fill="none" stroke="#fefefe" stroke-width="2.1" stroke-linecap="round" stroke-linejoin="round"/>
<path d="M3060.9,1779.6000000000001 L3066.9,1785.2 L3072.9,1779.6000000000001" fill="none" stroke="#fefefe" stroke-width="2.1" stroke-linecap="round" stroke-linejoin="round"/>
<text x="2467.19" y="1784.00" font-size="30.5" fill="#fefefe" textLength="66.91" lengthAdjust="spacingAndGlyphs">Fade</text>
<text x="2439.95" y="1863.30" font-size="30.5" fill="#fefefe" textLength="122.15" lengthAdjust="spacingAndGlyphs">Duration</text>
<rect x="2571.90" y="1817.00" width="514.90" height="69.80" rx="9" fill="#3c3f4b" />
<text x="2591.25" y="1861.80" font-size="30.5" fill="#fefefe" textLength="99.25" lengthAdjust="spacingAndGlyphs">300 ms</text>
<path d="M3053.5,1840.2 L3061.1,1832.3999999999999 L3068.7,1840.2" fill="none" stroke="#fefefe" stroke-width="2.5" stroke-linecap="round" stroke-linejoin="round"/>
<path d="M3053.5,1864.1 L3061.1,1871.9 L3068.7,1864.1" fill="none" stroke="#fefefe" stroke-width="2.5" stroke-linecap="round" stroke-linejoin="round"/>
<rect x="2837.10" y="1898.50" width="71.70" height="58.20" rx="10" fill="#3c3f4b" />
<rect x="2857.00" y="1925.50" width="32.00" height="4.2" fill="#fefefe"/>
<rect x="2870.90" y="1911.60" width="4.2" height="32.00" fill="#fefefe"/>
<rect x="2927.30" y="1898.50" width="71.40" height="58.20" rx="10" fill="#1a1c26" />
<path d="M2946,1917.0 V1913.5 Q2946,1912.0 2948,1912.0 H2958 Q2960,1909.5 2963,1909.5 Q2966,1909.5 2968,1912.0 H2978 Q2980,1912.0 2980,1913.5 V1917.0 Z" fill="#d6d8e0"/>
<path d="M2948,1919.0 H2952.2 V1938.5 Q2952.2,1940.7 2954.4,1940.7 H2971.6 Q2973.8,1940.7 2973.8,1938.5 V1919.0 H2978 V1939.5 Q2978,1945.5 2972,1945.5 H2954 Q2948,1945.5 2948,1939.5 Z" fill="#d6d8e0"/>
<rect x="2957.40" y="1922.0" width="1.9" height="16" fill="#d6d8e0"/>
<rect x="2962.10" y="1922.0" width="1.9" height="16" fill="#d6d8e0"/>
<rect x="2966.80" y="1922.0" width="1.9" height="16" fill="#d6d8e0"/>
<rect x="3017.50" y="1898.50" width="71.40" height="58.20" rx="10" fill="#1a1c26" />
<circle cx="3053.2" cy="1914.00" r="4.6" fill="#d6d8e0"/>
<circle cx="3053.2" cy="1927.60" r="4.6" fill="#d6d8e0"/>
<circle cx="3053.2" cy="1941.20" r="4.6" fill="#d6d8e0"/>
<path d="M3114,1727 V1668 Q3114,1658 3124,1658 H3829 Q3839,1658 3839,1668 V1727 Z" fill="#3c3f4b"/>
<path d="M3114,1727 H3839 V2225.3 Q3839,2235.3 3829,2235.3 H3124 Q3114,2235.3 3114,2225.3 Z" fill="#2a2c38"/>
<text x="3140.87" y="1704.80" font-size="32.5" font-weight="bold" fill="#fefefe" textLength="132.95" lengthAdjust="spacingAndGlyphs">Controls</text>
<rect x="3797.00" y="1677.00" width="23.50" height="19.40" fill="#3c3f4b"/>
<rect x="3798.00" y="1678.00" width="21.50" height="17.40" fill="none" stroke="#fefefe" stroke-width="2"/>
<rect x="3797.00" y="1677.00" width="23.50" height="5" fill="#fefefe"/>
<rect x="3807.70" y="1691.20" width="23.30" height="19.60" fill="#3c3f4b"/>
<rect x="3808.70" y="1692.20" width="21.30" height="17.60" fill="none" stroke="#fefefe" stroke-width="2"/>
<rect x="3807.70" y="1691.20" width="23.30" height="5" fill="#fefefe"/>
<rect x="3125.30" y="1739.00" width="703.90" height="84.80" rx="10" fill="#3c3f4b" />
<text x="3370.71" y="1793.00" font-size="30.5" fill="#fefefe" textLength="213.07" lengthAdjust="spacingAndGlyphs">Start Streaming</text>
<rect x="3125.30" y="1833.30" width="703.90" height="84.70" rx="10" fill="#3c3f4b" />
<text x="3372.22" y="1886.80" font-size="30.5" fill="#fefefe" textLength="210.63" lengthAdjust="spacingAndGlyphs">Start Recording</text>
<rect x="3125.30" y="1927.90" width="627.50" height="66.90" rx="10" fill="#3c3f4b" />
<text x="3300.82" y="1972.50" font-size="30.5" fill="#fefefe" textLength="274.38" lengthAdjust="spacingAndGlyphs">Start Virtual Camera</text>
<rect x="3125.30" y="2004.00" width="703.90" height="66.90" rx="10" fill="#3c3f4b" />
<text x="3389.99" y="2048.60" font-size="30.5" fill="#fefefe" textLength="174.39" lengthAdjust="spacingAndGlyphs">Studio Mode</text>
<rect x="3125.30" y="2080.70" width="703.90" height="66.90" rx="10" fill="#3c3f4b" />
<text x="3422.73" y="2125.90" font-size="30.5" fill="#fefefe" textLength="108.65" lengthAdjust="spacingAndGlyphs">Settings</text>
<rect x="3125.30" y="2157.10" width="703.90" height="66.90" rx="10" fill="#3c3f4b" />
<text x="3451.42" y="2202.00" font-size="30.5" fill="#fefefe" textLength="50.30" lengthAdjust="spacingAndGlyphs">Exit</text>
<rect x="3762.60" y="1927.90" width="66.60" height="66.90" rx="10" fill="#3c3f4b" />
<path d="M3793.60,1949.87 L3793.56,1946.75 L3798.84,1946.75 L3798.80,1949.87 L3802.37,1951.35 L3804.55,1949.12 L3808.28,1952.85 L3806.05,1955.03 L3807.53,1958.60 L3810.65,1958.56 L3810.65,1963.84 L3807.53,1963.80 L3806.05,1967.37 L3808.28,1969.55 L3804.55,1973.28 L3802.37,1971.05 L3798.80,1972.53 L3798.84,1975.65 L3793.56,1975.65 L3793.60,1972.53 L3790.03,1971.05 L3787.85,1973.28 L3784.12,1969.55 L3786.35,1967.37 L3784.87,1963.80 L3781.75,1963.84 L3781.75,1958.56 L3784.87,1958.60 L3786.35,1955.03 L3784.12,1952.85 L3787.85,1949.12 L3790.03,1951.35 Z M3803.85,1961.20 A7.65,7.65 0 1 0 3788.55,1961.20 A7.65,7.65 0 1 0 3803.85,1961.20 Z" fill="#fff" fill-rule="evenodd" stroke="#fff" stroke-width="1.53" stroke-linejoin="round"/>
<rect x="0.00" y="2235.30" width="3839.00" height="57.70" rx="0" fill="#1f212a" />
<rect x="0.00" y="2291.00" width="3839.00" height="2.00" rx="0" fill="#3a3a3a" />
<text x="2940.26" y="2275.70" font-size="30.5" fill="#fefefe" textLength="188.55" lengthAdjust="spacingAndGlyphs">LIVE: 00:00:00</text>
<text x="3200.29" y="2275.50" font-size="30.5" fill="#fefefe" textLength="184.81" lengthAdjust="spacingAndGlyphs">REC: 00:00:00</text>
<text x="3444.14" y="2275.50" font-size="30.5" fill="#fefefe" textLength="276.90" lengthAdjust="spacingAndGlyphs">CPU: 0.1%, 59.94 fps</text>
<circle cx="3165.5" cy="2265.5" r="11.4" fill="#a3a29e"/>
<path d="M3154.5,2279 L3178.5,2255" stroke="#1f212a" stroke-width="3"/>
<path d="M3152.5,2276.8 L3176.5,2252.8" stroke="#a3a29e" stroke-width="3.2"/>
<path d="M2890.37,2278.97 A19.6,19.6 0 0 1 2890.37,2252.23 M2919.03,2252.23 A19.6,19.6 0 0 1 2919.03,2278.97 M2893.82,2274.73 A14.2,14.2 0 0 1 2893.82,2256.47 M2915.58,2256.47 A14.2,14.2 0 0 1 2915.58,2274.73" fill="none" stroke="#a3a29e" stroke-width="3.9" stroke-linecap="round"/>
<circle cx="2904.7" cy="2265.6" r="8.5" fill="#a3a29e"/>
<path d="M2889.5,2282 L2921.5,2250" stroke="#1f212a" stroke-width="3.2"/>
<path d="M2887.6,2280.4 L2919.5,2248.5" stroke="#a3a29e" stroke-width="3.4"/>
<rect x="705.2" y="1065" width="578.3" height="1127.5" rx="1.5" fill="#000" opacity="0.12"/>
<rect x="704.2" y="1064" width="577.8" height="1127" fill="#000" opacity="0.3"/>
<rect x="704.20" y="1064.00" width="575.80" height="1125.00" rx="0" fill="#1f212a" />
<rect x="711.00" y="1408.20" width="562.20" height="67.60" rx="10" fill="#284cb8" />
<text x="769.54" y="1116.00" font-size="30.5" fill="#fefefe" textLength="449.30" lengthAdjust="spacingAndGlyphs">Application Audio Capture (BETA)</text>
<text x="769.54" y="1183.50" font-size="30.5" fill="#fefefe" textLength="275.24" lengthAdjust="spacingAndGlyphs">Audio Input Capture</text>
<text x="769.54" y="1251.00" font-size="30.5" fill="#fefefe" textLength="300.04" lengthAdjust="spacingAndGlyphs">Audio Output Capture</text>
<text x="767.04" y="1318.50" font-size="30.5" fill="#fefefe" textLength="114.27" lengthAdjust="spacingAndGlyphs">Browser</text>
<text x="768.07" y="1386.00" font-size="30.5" fill="#fefefe" textLength="175.26" lengthAdjust="spacingAndGlyphs">Color Source</text>
<text x="767.09" y="1453.50" font-size="30.5" fill="#fefefe" textLength="217.36" lengthAdjust="spacingAndGlyphs">Display Capture</text>
<text x="768.08" y="1521.00" font-size="30.5" fill="#fefefe" textLength="198.67" lengthAdjust="spacingAndGlyphs">Game Capture</text>
<text x="766.73" y="1588.50" font-size="30.5" fill="#fefefe" textLength="86.45" lengthAdjust="spacingAndGlyphs">Image</text>
<text x="766.86" y="1656.00" font-size="30.5" fill="#fefefe" textLength="239.27" lengthAdjust="spacingAndGlyphs">Image Slide Show</text>
<text x="767.11" y="1723.50" font-size="30.5" fill="#fefefe" textLength="187.44" lengthAdjust="spacingAndGlyphs">Media Source</text>
<text x="768.28" y="1791.00" font-size="30.5" fill="#fefefe" textLength="82.31" lengthAdjust="spacingAndGlyphs">Scene</text>
<text x="768.96" y="1858.50" font-size="30.5" fill="#fefefe" textLength="150.12" lengthAdjust="spacingAndGlyphs">Text (GDI+)</text>
<text x="769.47" y="1926.00" font-size="30.5" fill="#fefefe" textLength="290.16" lengthAdjust="spacingAndGlyphs">Video Capture Device</text>
<text x="769.47" y="1993.50" font-size="30.5" fill="#fefefe" textLength="226.29" lengthAdjust="spacingAndGlyphs">Window Capture</text>
<text x="768.02" y="2076.00" font-size="30.5" fill="#fefefe" textLength="87.30" lengthAdjust="spacingAndGlyphs">Group</text>
<text x="767.05" y="2159.00" font-size="30.5" fill="#fefefe" textLength="160.86" lengthAdjust="spacingAndGlyphs">Deprecated</text>
<rect x="724.00" y="2023.00" width="535.70" height="2.00" rx="0" fill="#3c3f4b" />
<rect x="724.00" y="2106.00" width="535.70" height="2.00" rx="0" fill="#3c3f4b" />
<path d="M1248.5,2136 L1262,2149 L1248.5,2162 Z" fill="#fff"/>
<rect x="719.9" y="1086.7" width="36.1" height="36.3" rx="4" fill="#fff"/>
<rect x="724.6" y="1096.1" width="26.7" height="22.2" fill="#1f212a"/>
<path d="M731.4,1102 L737.4,1099 V1115 L731.4,1112.1 H729 Q726.7,1112.1 726.7,1109.8 V1104.3 Q726.7,1102 729,1102 Z" fill="#fff"/>
<path d="M741.3,1101.2 Q745.5,1106.75 741.3,1112.3 M744.9,1098.5 Q751.3,1106.75 744.9,1115" fill="none" stroke="#fff" stroke-width="2.2" stroke-linecap="round"/>
<rect x="730.8" y="1155.9" width="11.9" height="23.1" rx="5.95" fill="#fff"/>
<path d="M727.85,1165.9 V1170.7 A9,9 0 0 0 745.85,1170.7 V1165.9" fill="none" stroke="#fff" stroke-width="2.3" stroke-linecap="round"/>
<rect x="733.4" y="1179.5" width="6.9" height="7" fill="#fff"/>
<path d="M726.7,1190 V1187 Q726.7,1185.4 728.3,1185.4 H745.4 Q747,1185.4 747,1187 V1190 Z" fill="#fff"/>
<g transform="translate(720,1223.6) scale(1.0)"><path d="M7.1,9 L16.4,0 V32.1 L7.1,23 H3.2 Q0,23 0,19.8 V12.2 Q0,9 3.2,9 Z" fill="#fefefe"/><path d="M22.3,8.9 Q28.9,16 22.3,23.1" fill="none" stroke="#fefefe" stroke-width="3.5" stroke-linecap="round"/><path d="M30.3,3.8 Q39.3,16 30.3,28.2" fill="none" stroke="#fefefe" stroke-width="3.5" stroke-linecap="round"/></g>
<circle cx="738" cy="1307" r="18.1" fill="#fff"/>
<path d="M733.8,1294.5 A13.1,13.1 0 0 0 728.8,1316.7 L728.6,1309.3 L725.6,1307 L725.8,1305.8 L728.8,1304 L732,1300.4 Z" fill="#1f212a"/>
<path d="M743.60,1299.50 L748.60,1299.50 L751.30,1306.40 L745.70,1307.00 L744.50,1308.70 L744.50,1313.50 L743.30,1314.70 L742.10,1313.50 L741.80,1309.30 L739.40,1308.40 L739.10,1304.00 L741.20,1303.10 L742.70,1301.60 Z" fill="#1f212a"/>
<ellipse cx="738.8" cy="1299.2" rx="1.5" ry="2.4" fill="#1f212a"/>
<path d="M742.5,1296.8 Q744,1294.6 747.2,1297.3 Z" fill="#1f212a" stroke="#1f212a" stroke-width="1.5"/>
<path d="M740.5,1372.3 L752.6,1360.2" stroke="#fff" stroke-width="5.8" stroke-linecap="round"/>
<path d="M721.9,1390.9 V1381.7 A9.2,9.2 0 1 1 731.1,1390.9 Z" fill="#fff"/>
<rect x="722.2" y="1428.2" width="31.6" height="25.1" rx="5.5" fill="none" stroke="#fff" stroke-width="4.4"/>
<path d="M729,1457.3 H747 Q744,1460.5 738,1460.5 Q732,1460.5 729,1457.3 Z" fill="#fff"/>
<path d="M728.2,1500.5 H747.8 Q756,1500.5 756,1508.7 Q756,1517 749,1517 Q745.5,1517 743,1513.5 H733 Q730.5,1517 727,1517 Q720,1517 720,1508.7 Q720,1500.5 728.2,1500.5 Z" fill="#fff"/>
<path d="M724.5,1509 H731.5 M728,1505.5 V1512.5" stroke="#1f212a" stroke-width="2"/>
<circle cx="744.5" cy="1505.3" r="2.3" fill="#1f212a"/><circle cx="749.5" cy="1510.5" r="2.3" fill="#1f212a"/>
<rect x="724" y="1563.2" width="28" height="27.3" rx="5.5" fill="none" stroke="#fff" stroke-width="4.4"/>
<circle cx="733" cy="1572" r="3" fill="#fff"/>
<path d="M728,1587 L735,1580 L738,1583 L743,1577 L748.5,1583 V1587 Z" fill="#fff"/>
<rect x="720" y="1631.3" width="33.3" height="4.5" rx="2" fill="#fff"/>
<rect x="722" y="1633" width="29.3" height="20" fill="#fff"/>
<circle cx="735.5" cy="1643" r="5.2" fill="#1f212a"/>
<path d="M736.8,1641.7 V1636.3 A5.4,5.4 0 0 1 742.2,1641.7 Z" fill="#fff"/>
<path d="M736.6,1653 V1657.5 M731.5,1662 L736.6,1657.5 L741.7,1662" fill="none" stroke="#fff" stroke-width="2" stroke-linecap="round"/>
<path d="M725,1699 Q725,1695 728.5,1697 L751.5,1709.5 Q754,1712 751.5,1714.5 L728.5,1727 Q725,1729 725,1725 Z" fill="#fff"/>
<rect x="724.2" y="1765.6" width="4.8" height="4.8" rx="1.5" fill="#fff"/>
<rect x="733.5" y="1765.6" width="20.5" height="4.8" rx="1.5" fill="#fff"/>
<rect x="724.2" y="1777.4" width="4.8" height="4.8" rx="1.5" fill="#fff"/>
<rect x="733.5" y="1777.4" width="20.5" height="4.8" rx="1.5" fill="#fff"/>
<rect x="724.2" y="1789.2" width="4.8" height="4.8" rx="1.5" fill="#fff"/>
<rect x="733.5" y="1789.2" width="20.5" height="4.8" rx="1.5" fill="#fff"/>
<path d="M726.7,1840 H731 Q735.9,1840 735.9,1845 V1858.2 H727.5 Q721.8,1858.2 721.8,1852.5 Q721.8,1846.7 727.5,1846.7 H730.8 V1844.1 H726.7 Z M727.8,1851.1 H730.8 V1853.8 H727.8 Q726.5,1853.8 726.5,1852.45 Q726.5,1851.1 727.8,1851.1 Z" fill="#fff" fill-rule="evenodd"/>
<path d="M737.8,1838 H742.5 V1844.6 H745 Q751.9,1844.6 751.9,1851.4 Q751.9,1858.2 745,1858.2 H737.8 Z M742.5,1849.2 H745 Q747.1,1849.2 747.1,1851.5 Q747.1,1853.8 745,1853.8 H742.5 Z" fill="#fff" fill-rule="evenodd"/>
<rect x="730.8" y="1901" width="14.3" height="7" rx="2" fill="#fff"/>
<rect x="721.9" y="1905.8" width="32.1" height="22.8" rx="2.5" fill="#fff"/>
<circle cx="738" cy="1917.3" r="6.9" fill="none" stroke="#1f212a" stroke-width="4"/>
<rect x="719.9" y="1963.7" width="36.1" height="36.3" rx="4" fill="#fff"/>
<rect x="724.6" y="1977.5" width="26.7" height="17.8" fill="#1f212a"/>
<rect x="744.90" y="1968.40" width="2.2" height="2.2" rx="0.6" fill="#1f212a"/>
<rect x="749.20" y="1968.40" width="2.2" height="2.2" rx="0.6" fill="#1f212a"/>
<rect x="747.05" y="1970.60" width="2.2" height="2.2" rx="0.6" fill="#1f212a"/>
<rect x="744.90" y="1972.80" width="2.2" height="2.2" rx="0.6" fill="#1f212a"/>
<rect x="749.20" y="1972.80" width="2.2" height="2.2" rx="0.6" fill="#1f212a"/>
<path d="M748.9,2062.9 V2059.6 Q748.9,2056.1 745.4,2056.1 H738.3 L733.5,2051.5 H727.5 Q722.4,2051.5 722.4,2056.6 V2073.2 Q722.4,2078.3 727.5,2078.3 H746" fill="none" stroke="#fff" stroke-width="4.3" stroke-linejoin="round"/>
<path d="M729.3,2072.6 L733.8,2065 Q735.1,2062.9 737.5,2062.9 H750.8 Q754.4,2062.9 753.5,2066 L750.3,2075.2 Q749.1,2078.3 745.8,2078.3 H740" fill="none" stroke="#fff" stroke-width="4.3" stroke-linejoin="round" stroke-linecap="round"/>
</svg>
</body></html>
